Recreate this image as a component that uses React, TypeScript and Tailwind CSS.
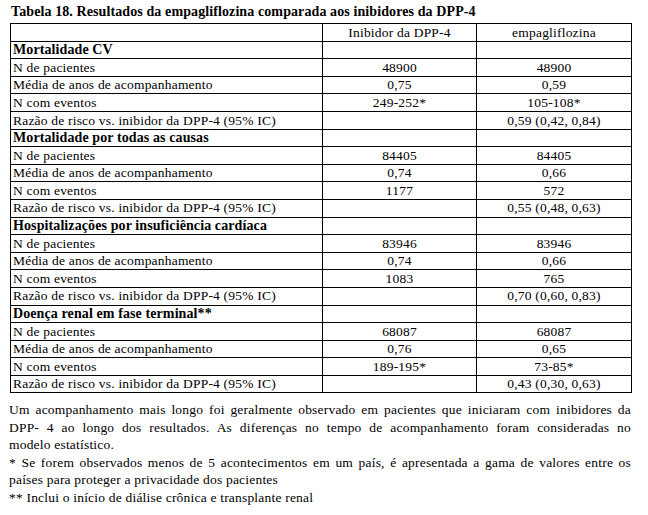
import React from "react";

type Row = { label: string; a: string; b: string };
type Section = { title: string; rows: Row[] };

const RISK = "Razão de risco vs. inibidor da DPP-4 (95% IC)";

const sections: Section[] = [
  {
    title: "Mortalidade CV",
    rows: [
      { label: "N de pacientes", a: "48900", b: "48900" },
      { label: "Média de anos de acompanhamento", a: "0,75", b: "0,59" },
      { label: "N com eventos", a: "249-252*", b: "105-108*" },
      { label: RISK, a: "", b: "0,59 (0,42, 0,84)" },
    ],
  },
  {
    title: "Mortalidade por todas as causas",
    rows: [
      { label: "N de pacientes", a: "84405", b: "84405" },
      { label: "Média de anos de acompanhamento", a: "0,74", b: "0,66" },
      { label: "N com eventos", a: "1177", b: "572" },
      { label: RISK, a: "", b: "0,55 (0,48, 0,63)" },
    ],
  },
  {
    title: "Hospitalizações por insuficiência cardíaca",
    rows: [
      { label: "N de pacientes", a: "83946", b: "83946" },
      { label: "Média de anos de acompanhamento", a: "0,74", b: "0,66" },
      { label: "N com eventos", a: "1083", b: "765" },
      { label: RISK, a: "", b: "0,70 (0,60, 0,83)" },
    ],
  },
  {
    title: "Doença renal em fase terminal**",
    rows: [
      { label: "N de pacientes", a: "68087", b: "68087" },
      { label: "Média de anos de acompanhamento", a: "0,76", b: "0,65" },
      { label: "N com eventos", a: "189-195*", b: "73-85*" },
      { label: RISK, a: "", b: "0,43 (0,30, 0,63)" },
    ],
  },
];

const cell = "border border-black h-[17.6px] p-0 leading-none";

export default function App() {
  return (
    <div className="w-[648px] h-[515px] bg-white text-black text-[13.5px] tracking-[0.2px] font-['Liberation_Serif',Tinos,'Times_New_Roman',Georgia,Cambria,serif]">
      <div className="pl-[11px] pt-[4px] h-[23px] font-bold text-[14px] tracking-[0.1px] leading-[16px]">
        Tabela 18. Resultados da empagliflozina comparada aos inibidores da DPP-4
      </div>

      <table className="ml-[10px] w-[621px] border-collapse table-fixed">
        <colgroup>
          <col className="w-[312px]" />
          <col className="w-[154px]" />
          <col className="w-[155px]" />
        </colgroup>
        <tbody>
          <tr>
            <td className={cell}></td>
            <td className={`${cell} text-center`}>Inibidor da DPP-4</td>
            <td className={`${cell} text-center`}>empagliflozina</td>
          </tr>
          {sections.map((s) => (
            <React.Fragment key={s.title}>
              <tr>
                <td className={`${cell} pl-[2px] font-bold text-[14px] tracking-[0.1px]`}>{s.title}</td>
                <td className={cell}></td>
                <td className={cell}></td>
              </tr>
              {s.rows.map((r, i) => (
                <tr key={i}>
                  <td className={`${cell} pl-[2px]`}>{r.label}</td>
                  <td className={`${cell} text-center`}>{r.a}</td>
                  <td className={`${cell} text-center`}>{r.b}</td>
                </tr>
              ))}
            </React.Fragment>
          ))}
        </tbody>
      </table>

      <div className="ml-[9px] w-[622px] mt-[8px] leading-[17.4px]">
        <div className="whitespace-nowrap text-justify [text-align-last:justify]">
          Um acompanhamento mais longo foi geralmente observado em pacientes que iniciaram com inibidores da
        </div>
        <div className="whitespace-nowrap text-justify [text-align-last:justify]">
          DPP- 4 ao longo dos resultados. As diferenças no tempo de acompanhamento foram consideradas no
        </div>
        <div>modelo estatístico.</div>
        <div className="whitespace-nowrap text-justify [text-align-last:justify]">
          * Se forem observados menos de 5 acontecimentos em um país, é apresentada a gama de valores entre os
        </div>
        <div>países para proteger a privacidade dos pacientes</div>
        <div>** Inclui o início de diálise crônica e transplante renal</div>
      </div>
    </div>
  );
}
